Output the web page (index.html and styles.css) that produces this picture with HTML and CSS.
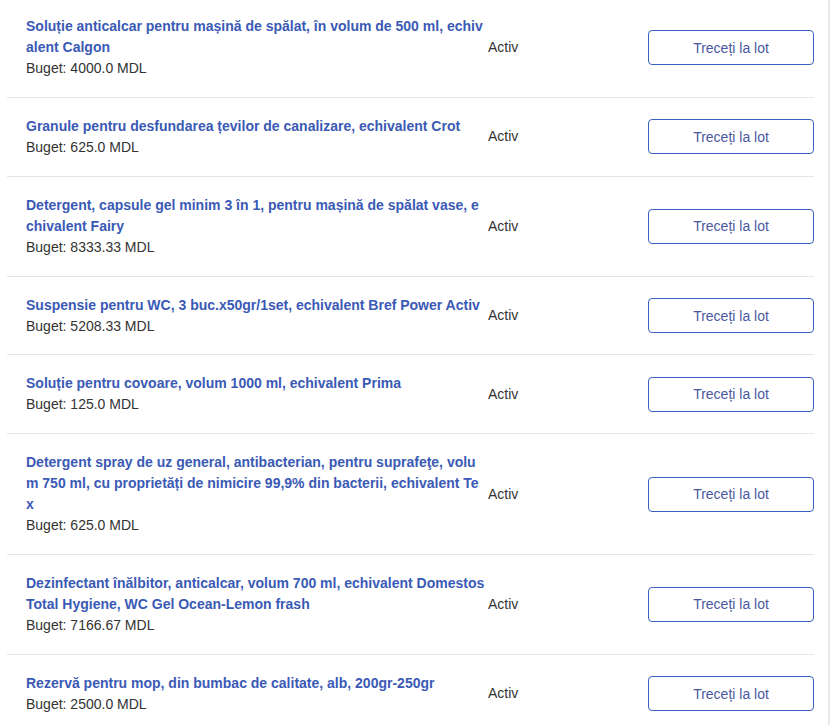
FILE: index.html
```html
<!DOCTYPE html>
<html lang="ro">
<head>
<meta charset="utf-8">
<link rel="stylesheet" href="styles.css">
</head>
<body>
<div class="panel">
  <div class="list">
    <div class="row">
      <div class="info"><a class="title">Soluție anticalcar pentru mașină de spălat, în volum de 500 ml, echivalent Calgon</a><div class="budget">Buget: 4000.0 MDL</div></div>
      <div class="status">Activ</div>
      <div class="action"><button class="btn">Treceți la lot</button></div>
    </div>
    <div class="row">
      <div class="info"><a class="title">Granule pentru desfundarea țevilor de canalizare, echivalent Crot</a><div class="budget">Buget: 625.0 MDL</div></div>
      <div class="status">Activ</div>
      <div class="action"><button class="btn">Treceți la lot</button></div>
    </div>
    <div class="row">
      <div class="info"><a class="title">Detergent, capsule gel minim 3 în 1, pentru mașină de spălat vase, echivalent Fairy</a><div class="budget">Buget: 8333.33 MDL</div></div>
      <div class="status">Activ</div>
      <div class="action"><button class="btn">Treceți la lot</button></div>
    </div>
    <div class="row">
      <div class="info"><a class="title">Suspensie pentru WC, 3 buc.x50gr/1set, echivalent Bref Power Activ</a><div class="budget">Buget: 5208.33 MDL</div></div>
      <div class="status">Activ</div>
      <div class="action"><button class="btn">Treceți la lot</button></div>
    </div>
    <div class="row">
      <div class="info"><a class="title">Soluție pentru covoare, volum 1000 ml, echivalent Prima</a><div class="budget">Buget: 125.0 MDL</div></div>
      <div class="status">Activ</div>
      <div class="action"><button class="btn">Treceți la lot</button></div>
    </div>
    <div class="row">
      <div class="info"><a class="title">Detergent spray de uz general, antibacterian, pentru suprafeţe, volum 750 ml, cu proprietăți de nimicire 99,9% din bacterii, echivalent Tex</a><div class="budget">Buget: 625.0 MDL</div></div>
      <div class="status">Activ</div>
      <div class="action"><button class="btn">Treceți la lot</button></div>
    </div>
    <div class="row">
      <div class="info"><a class="title">Dezinfectant înălbitor, anticalcar, volum 700 ml, echivalent Domestos Total Hygiene, WC Gel Ocean-Lemon frash</a><div class="budget">Buget: 7166.67 MDL</div></div>
      <div class="status">Activ</div>
      <div class="action"><button class="btn">Treceți la lot</button></div>
    </div>
    <div class="row">
      <div class="info"><a class="title">Rezervă pentru mop, din bumbac de calitate, alb, 200gr-250gr</a><div class="budget">Buget: 2500.0 MDL</div></div>
      <div class="status">Activ</div>
      <div class="action"><button class="btn">Treceți la lot</button></div>
    </div>
  </div>
</div>
</body>
</html>
```
FILE: styles.css
```css
html, body {
  margin: 0;
  padding: 0;
  background: #ffffff;
  overflow: hidden;
}
body {
  font-family: "Liberation Sans", Arial, sans-serif;
  font-size: 14px;
  line-height: 21px;
  color: #333333;
}
.panel {
  width: 828px;
  border-right: 2px solid #e9e9e9;
  min-height: 725px;
}
.list {
  margin-top: -1.84px;
  padding: 0 14px 0 7px;
}
.row {
  display: grid;
  grid-template-columns: 460px 1fr 166px;
  column-gap: 2px;
  align-items: center;
  padding: 17.92px 0 17.92px 19px;
  border-bottom: 1px solid #e4e4e4;
}
.info {
  word-break: break-all;
}
.title {
  display: block;
  font-weight: bold;
  color: #3a5ab5;
  text-decoration: none;
}
.budget {
  color: #333333;
}
.status {
  color: #333333;
}
.action {
  display: flex;
  justify-content: flex-end;
}
.btn {
  width: 166px;
  height: 35px;
  border: 1px solid #3a62c0;
  border-radius: 4px;
  background: #ffffff;
  color: #4a58a0;
  font-family: "Liberation Sans", Arial, sans-serif;
  font-size: 14px;
  padding: 0;
}
```
